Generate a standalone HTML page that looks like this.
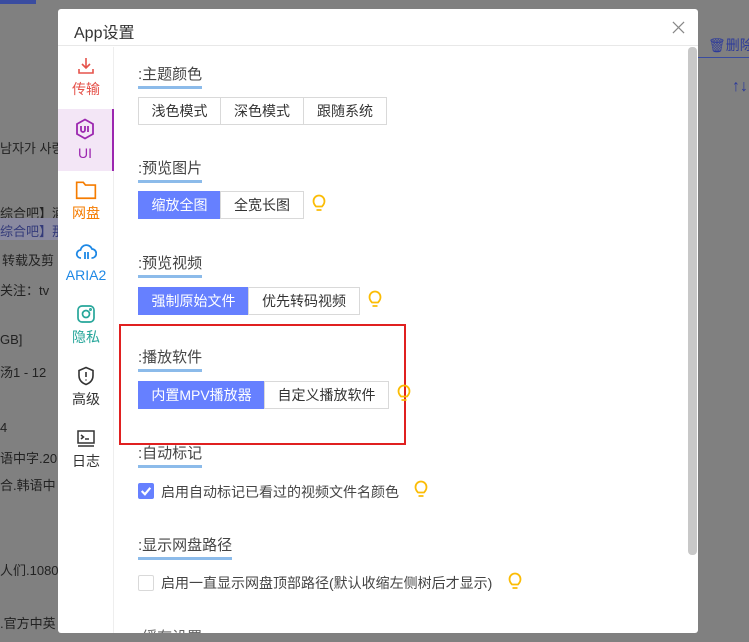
<!DOCTYPE html>
<html><head><meta charset="utf-8"><style>
*{margin:0;padding:0;box-sizing:border-box}
body{width:749px;height:642px;overflow:hidden;background:#808080;font-family:"Liberation Sans","Noto Sans CJK SC",sans-serif;position:relative;color:#333}
.bg{position:absolute;font-size:13px;color:#222;white-space:nowrap}
.dlg{position:absolute;left:58px;top:9px;width:640px;height:624px;background:#fff;border-radius:3px;overflow:hidden}
.hd{height:37px;border-bottom:1px solid #e8e8e8;position:relative}
.hd .t{position:absolute;left:16px;top:10px;font-size:16px;color:#333}
.hd .x{position:absolute;left:614px;top:12px}
.side{position:absolute;left:0;top:38px;width:56px;height:600px;border-right:1px solid #eee}
.it{position:absolute;left:0;width:56px;height:62px;text-align:center;font-size:14px;line-height:18px}
.it svg{display:block;margin:9px auto 4px}
.sb{position:absolute;left:630px;top:38px;width:9px;height:508px;background:#c8c8c8;border-radius:4px}
.c{position:absolute;left:80px;font-size:14px}
.tt{position:absolute;left:80px;font-size:15px;color:#444;border-bottom:3px solid #8cbbea;line-height:20px;padding-bottom:1px}
.bg2{position:absolute;left:80px;display:flex;height:28px}
.bg2 span{border:1px solid #d9d9d9;margin-left:-1px;line-height:26px;font-size:14px;color:#333;background:#fff;text-align:center}
.bg2 span.on{background:#6680ff;border-color:#6680ff;color:#fff;margin-left:0}
.bulb{position:absolute}
.cb{position:absolute;left:80px;width:16px;height:16px;border:1px solid #d9d9d9;border-radius:2px}
</style></head><body>
<div style="position:absolute;left:0;top:0;width:36px;height:4px;background:#3a4ca0"></div>
<div class="bg" style="left:0;top:138px">남자가 사랑</div>
<div class="bg" style="left:0;top:203px">综合吧】酒</div>
<div class="bg" style="left:0;top:218px;width:58px;height:22px;background:#8a8aa0"></div>
<div class="bg" style="left:0;top:221px;color:#333a7a">综合吧】那</div>
<div class="bg" style="left:2px;top:250px">转载及剪</div>
<div class="bg" style="left:0;top:280px">关注：tv</div>
<div class="bg" style="left:0;top:332px">GB]</div>
<div class="bg" style="left:0;top:362px">汤1 - 12</div>
<div class="bg" style="left:0;top:420px">4</div>
<div class="bg" style="left:0;top:448px">语中字.20</div>
<div class="bg" style="left:0;top:475px">合.韩语中</div>
<div class="bg" style="left:0;top:560px">人们.1080</div>
<div class="bg" style="left:0;top:613px">.官方中英</div>
<div class="bg" style="left:708px;top:35px;color:#2c3a9a;font-size:14px">🗑删除</div>
<div class="bg" style="left:698px;top:57px;width:51px;height:1px;background:#3a4ca0"></div>
<div class="bg" style="left:732px;top:78px;color:#2c3a9a;font-size:16px">↑↓</div>

<div class="dlg">
 <div class="hd"><div class="t">App设置</div>
  <svg class="x" width="13" height="13" viewBox="0 0 14 14"><path d="M1 1L13 13M13 1L1 13" stroke="#888" stroke-width="1.3"/></svg></div>
 <div class="side">
  <div class="it" style="top:0;color:#e5534b"><svg width="20" height="20" viewBox="0 0 20 20" fill="none" stroke="#e5534b" stroke-width="1.6"><path d="M10 2v10M6 8l4 4 4-4M3 13v4h14v-4"/></svg>传输</div>
  <div class="it" style="top:62px;background:#f3e6f6;border-right:2px solid #9c27b0;color:#9c27b0;height:62px"><svg width="20" height="22" viewBox="0 0 20 22" fill="none" stroke="#9c27b0" stroke-width="1.8"><path d="M10 1.5l8 4.5v10l-8 4.5-8-4.5V6z"/><path d="M6 8v4a2 2 0 004 0V8M13 8v6"/></svg>UI</div>
  <div class="it" style="top:124px;color:#f57c00"><svg width="22" height="20" viewBox="0 0 20 18" fill="none" stroke="#f57c00" stroke-width="1.5"><path d="M1.5 2h6l2 2.5h9v12h-17z"/></svg>网盘</div>
  <div class="it" style="top:186px;color:#1e88e5"><svg width="22" height="20" viewBox="0 0 22 18" fill="none" stroke="#1e88e5" stroke-width="1.8"><path d="M6 15a4 4 0 01-.5-8A6 6 0 0117 6a4.5 4.5 0 01-.5 9"/><path d="M10 9v7M13 9v7"/></svg>ARIA2</div>
  <div class="it" style="top:248px;color:#26a69a"><svg width="20" height="20" viewBox="0 0 20 20" fill="none" stroke="#26a69a" stroke-width="1.7"><rect x="2" y="2" width="16" height="16" rx="4"/><circle cx="10" cy="10" r="3.5"/><circle cx="14.5" cy="5.5" r=".6"/></svg>隐私</div>
  <div class="it" style="top:310px;color:#333"><svg width="20" height="20" viewBox="0 0 20 20" fill="none" stroke="#333" stroke-width="1.6"><path d="M10 1.5l7 3v5c0 4.5-3 7.5-7 9-4-1.5-7-4.5-7-9v-5z"/><path d="M10 6v5M10 13.5v1"/></svg>高级</div>
  <div class="it" style="top:372px;color:#333"><svg width="20" height="20" viewBox="0 0 20 18" fill="none" stroke="#333" stroke-width="1.5"><rect x="2" y="2" width="16" height="12"/><path d="M5 6l2.5 2L5 10M9 10h4M2 17h16"/></svg>日志</div>
 </div>
 <div class="sb"></div>

 <div class="tt" style="top:56px">:主题颜色</div>
 <div class="bg2" style="top:88px"><span style="margin-left:0;width:83px">浅色模式</span><span style="width:84px">深色模式</span><span style="width:84px">跟随系统</span></div>

 <div class="tt" style="top:150px">:预览图片</div>
 <div class="bg2" style="top:182px"><span class="on" style="width:83px">缩放全图</span><span style="width:84px">全宽长图</span></div>
 <svg class="bulb" style="left:254px;top:185px" width="14" height="18" viewBox="0 0 14 18" fill="none" stroke="#fbbc05" stroke-width="1.8"><path d="M4 12.5C2.5 11 1.5 9.5 1.5 7a5.5 5.5 0 0111 0c0 2.5-1 4-2.5 5.5zM4.5 16h5"/></svg>

 <div class="tt" style="top:245px">:预览视频</div>
 <div class="bg2" style="top:278px"><span class="on" style="width:111px">强制原始文件</span><span style="width:112px">优先转码视频</span></div>
 <svg class="bulb" style="left:310px;top:281px" width="14" height="18" viewBox="0 0 14 18" fill="none" stroke="#fbbc05" stroke-width="1.8"><path d="M4 12.5C2.5 11 1.5 9.5 1.5 7a5.5 5.5 0 0111 0c0 2.5-1 4-2.5 5.5zM4.5 16h5"/></svg>

 <div style="position:absolute;left:61px;top:315px;width:287px;height:121px;border:2px solid #e02020"></div>
 <div class="tt" style="top:339px">:播放软件</div>
 <div class="bg2" style="top:372px"><span class="on" style="width:127px">内置MPV播放器</span><span style="width:125px">自定义播放软件</span></div>
 <svg class="bulb" style="left:339px;top:375px" width="14" height="18" viewBox="0 0 14 18" fill="none" stroke="#fbbc05" stroke-width="1.8"><path d="M4 12.5C2.5 11 1.5 9.5 1.5 7a5.5 5.5 0 0111 0c0 2.5-1 4-2.5 5.5zM4.5 16h5"/></svg>

 <div class="tt" style="top:435px">:自动标记</div>
 <div class="cb" style="top:474px;background:#6680ff;border-color:#6680ff"><svg width="14" height="14" viewBox="0 0 13 13"><path d="M2.5 6.5l3 3 5-6" stroke="#fff" stroke-width="2" fill="none"/></svg></div>
 <div class="c" style="left:103px;top:473px;color:#444">启用自动标记已看过的视频文件名颜色</div>
 <svg class="bulb" style="left:356px;top:471px" width="14" height="18" viewBox="0 0 14 18" fill="none" stroke="#fbbc05" stroke-width="1.8"><path d="M4 12.5C2.5 11 1.5 9.5 1.5 7a5.5 5.5 0 0111 0c0 2.5-1 4-2.5 5.5zM4.5 16h5"/></svg>

 <div class="tt" style="top:527px">:显示网盘路径</div>
 <div class="cb" style="top:566px"></div>
 <div class="c" style="left:103px;top:564px;color:#444">启用一直显示网盘顶部路径(默认收缩左侧树后才显示)</div>
 <svg class="bulb" style="left:450px;top:563px" width="14" height="18" viewBox="0 0 14 18" fill="none" stroke="#fbbc05" stroke-width="1.8"><path d="M4 12.5C2.5 11 1.5 9.5 1.5 7a5.5 5.5 0 0111 0c0 2.5-1 4-2.5 5.5zM4.5 16h5"/></svg>
 <div class="c" style="top:617px;font-size:15px;color:#666">:缓存设置</div>
</div>
</body></html>
